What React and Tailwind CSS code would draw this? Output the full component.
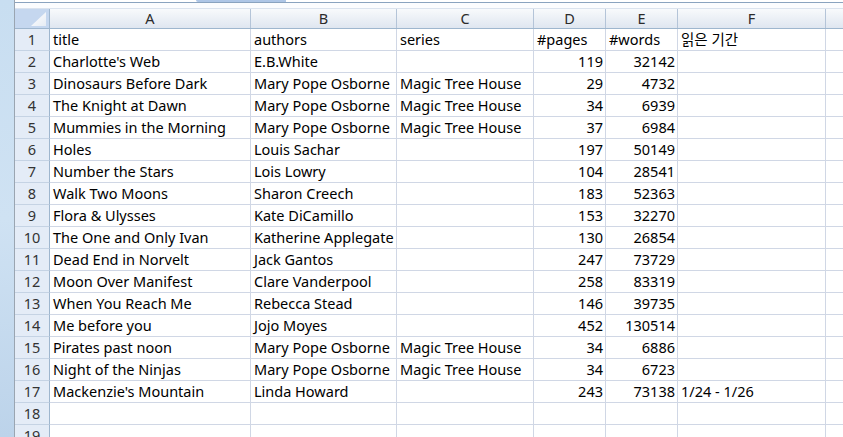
import React from "react";

const MPO = "Mary Pope Osborne";
const MTH = "Magic Tree House";
const rows = [
  ["title", "authors", "series", "#pages", "#words", "읽은 기간", true],
  ["Charlotte's Web", "E.B.White", "", "119", "32142", ""],
  ["Dinosaurs Before Dark", MPO, MTH, "29", "4732", ""],
  ["The Knight at Dawn", MPO, MTH, "34", "6939", ""],
  ["Mummies in the Morning", MPO, MTH, "37", "6984", ""],
  ["Holes", "Louis Sachar", "", "197", "50149", ""],
  ["Number the Stars", "Lois Lowry", "", "104", "28541", ""],
  ["Walk Two Moons", "Sharon Creech", "", "183", "52363", ""],
  ["Flora & Ulysses", "Kate DiCamillo", "", "153", "32270", ""],
  ["The One and Only Ivan", "Katherine Applegate", "", "130", "26854", ""],
  ["Dead End in Norvelt", "Jack Gantos", "", "247", "73729", ""],
  ["Moon Over Manifest", "Clare Vanderpool", "", "258", "83319", ""],
  ["When You Reach Me", "Rebecca Stead", "", "146", "39735", ""],
  ["Me before you", "Jojo Moyes", "", "452", "130514", ""],
  ["Pirates past noon", MPO, MTH, "34", "6886", ""],
  ["Night of the Ninjas", MPO, MTH, "34", "6723", ""],
  ["Mackenzie's Mountain", "Linda Howard", "", "243", "73138", "1/24 - 1/26"],
  ["", "", "", "", "", ""],
  ["", "", "", "", "", ""],
];

const font = { fontFamily: '"Noto Sans", "Noto Sans CJK KR", sans-serif' };

function HeaderCell({ w, label }) {
  return (
    <div
      className={`${w} shrink-0 h-full border-r border-[#b4c4d8] bg-gradient-to-b from-[#f8fafc] to-[#dfe6f0] flex items-center justify-center text-[14.5px] text-[#2b2b2b]`}
    >
      {label}
    </div>
  );
}

function Cell({ w, text, right }) {
  return (
    <div
      className={`${w} shrink-0 h-full border-r border-[#d0d7e5] flex items-center whitespace-nowrap overflow-visible text-[14.5px] text-black pt-px ${
        right ? "justify-end pr-[2px]" : "pl-[3px]"
      }`}
    >
      {text}
    </div>
  );
}

export default function App() {
  return (
    <div className="w-[843px] h-[437px] overflow-hidden flex bg-white" style={font}>
      <div className="w-[14px] h-full shrink-0 bg-gradient-to-b from-[#c8def1] via-[#cfe2f3] to-[#bcd3ea]" />
      <div className="w-px h-full shrink-0 bg-[#9aa5b1]" />
      <div className="flex-1 flex flex-col min-w-0">
        <div className="h-[2px] shrink-0 flex">
          <div className="w-[181px] shrink-0" />
          <div className="w-[90px] shrink-0 bg-[#aec6e6] rounded-bl-[6px]" />
        </div>
        <div className="h-px shrink-0 bg-[#8aa3bf]" />
        <div className="h-[5px] shrink-0 bg-[#fbfcfe]" />
        <div className="h-[21px] shrink-0 flex border-b border-[#9eb6ce] border-t border-t-[#dbe3ee]">
          <div className="w-[35px] shrink-0 h-full bg-[#c5d7ef] border-r border-[#9eb6ce] relative">
            <svg className="absolute right-[3px] bottom-[2px]" width="15" height="14" viewBox="0 0 15 14">
              <defs>
                <linearGradient id="tri" x1="0" y1="0" x2="1" y2="1">
                  <stop offset="0" stopColor="#ffffff" />
                  <stop offset="1" stopColor="#e6ecf4" />
                </linearGradient>
              </defs>
              <polygon points="15,0 15,14 0,14" fill="url(#tri)" />
            </svg>
          </div>
          <HeaderCell w="w-[201px]" label="A" />
          <HeaderCell w="w-[146px]" label="B" />
          <HeaderCell w="w-[137px]" label="C" />
          <HeaderCell w="w-[72px]" label="D" />
          <HeaderCell w="w-[72px]" label="E" />
          <HeaderCell w="w-[148px]" label="F" />
          <div className="flex-1 h-full bg-gradient-to-b from-[#f8fafc] to-[#dfe6f0]" />
        </div>
        {rows.map((r, i) => (
          <div key={i} className="h-[22px] shrink-0 flex border-b border-[#d0d7e5]">
            <div className="w-[35px] shrink-0 h-[22px] -mb-px bg-[#e4ecf7] border-r border-[#9eb6ce] border-b border-b-[#c5d3e4] flex items-center justify-center text-[14.5px] text-[#333] pt-px">
              {i + 1}
            </div>
            <Cell w="w-[201px]" text={r[0]} />
            <Cell w="w-[146px]" text={r[1]} />
            <Cell w="w-[137px]" text={r[2]} />
            <Cell w="w-[72px]" text={r[3]} right={!r[6]} />
            <Cell w="w-[72px]" text={r[4]} right={!r[6]} />
            <Cell w="w-[148px]" text={r[5]} />
            <div className="flex-1" />
          </div>
        ))}
      </div>
    </div>
  );
}
